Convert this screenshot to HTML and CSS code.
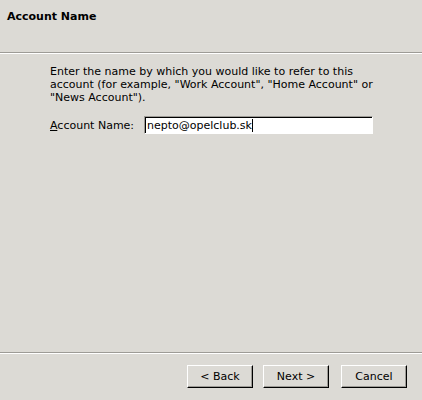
FILE: index.html
```html
<!DOCTYPE html>
<html>
<head>
<meta charset="utf-8">
<link rel="stylesheet" href="styles.css">
</head>
<body>
<div class="dialog">
  <div class="header"><span class="title">Account Name</span></div>
  <div class="sep"></div>
  <div class="content">
    <p class="intro">Enter the name by which you would like to refer to this account (for example, "Work Account", "Home Account" or "News Account").</p>
    <div class="field">
      <label class="label"><u>A</u>ccount Name:</label>
      <div class="input"><span class="value">nepto@opelclub.sk</span><span class="caret"></span></div>
    </div>
  </div>
  <div class="sep"></div>
  <div class="buttons">
    <div class="btn">&lt; Back</div>
    <div class="btn">Next &gt;</div>
    <div class="btn cancel">Cancel</div>
  </div>
</div>
</body>
</html>
```
FILE: styles.css
```css
html, body {
  margin: 0;
  padding: 0;
  background: #dcdad5;
}
.dialog {
  width: 422px;
  height: 400px;
  display: flex;
  flex-direction: column;
  font-family: "DejaVu Sans", sans-serif;
  font-size: 12px;
  color: #000;
}
.header {
  height: 52px;
  padding: 9px 0 0 7px;
  box-sizing: border-box;
}
.title {
  font-weight: bold;
  font-size: 11px;
}
.sep {
  height: 1px;
  background: #9d9b96;
  border-bottom: 1px solid #ffffff;
}
.content {
  flex: 1;
  padding: 11px 0 0 50px;
  font-size: 11px;
}
.intro {
  margin: 0;
  width: 340px;
  line-height: 13px;
}
.field {
  display: flex;
  align-items: center;
  margin-top: 12px;
}
.label {
  width: 94px;
}
.input {
  width: 229px;
  height: 18px;
  box-sizing: border-box;
  background: #fff;
  border-top: 1px solid #9d9b96;
  border-left: 1px solid #9d9b96;
  border-right: 1px solid #fff;
  border-bottom: 1px solid #fff;
  box-shadow: inset 1px 1px 0 #000;
  padding: 1px 0 0 2px;
  display: flex;
  align-items: center;
}
.caret {
  width: 1px;
  height: 13px;
  background: #000;
}
.buttons {
  height: 46px;
  display: flex;
  justify-content: flex-end;
  gap: 10px;
  padding: 11px 15px 0 0;
  box-sizing: border-box;
  font-size: 11px;
}
.btn {
  width: 66px;
  height: 23px;
  box-sizing: border-box;
  border-top: 1px solid #fff;
  border-left: 1px solid #fff;
  border-right: 1px solid #000;
  border-bottom: 1px solid #000;
  box-shadow: inset -1px -1px 0 #9d9b96;
  display: flex;
  align-items: center;
  justify-content: center;
}
.cancel {
  margin-left: 2px;
}
```
